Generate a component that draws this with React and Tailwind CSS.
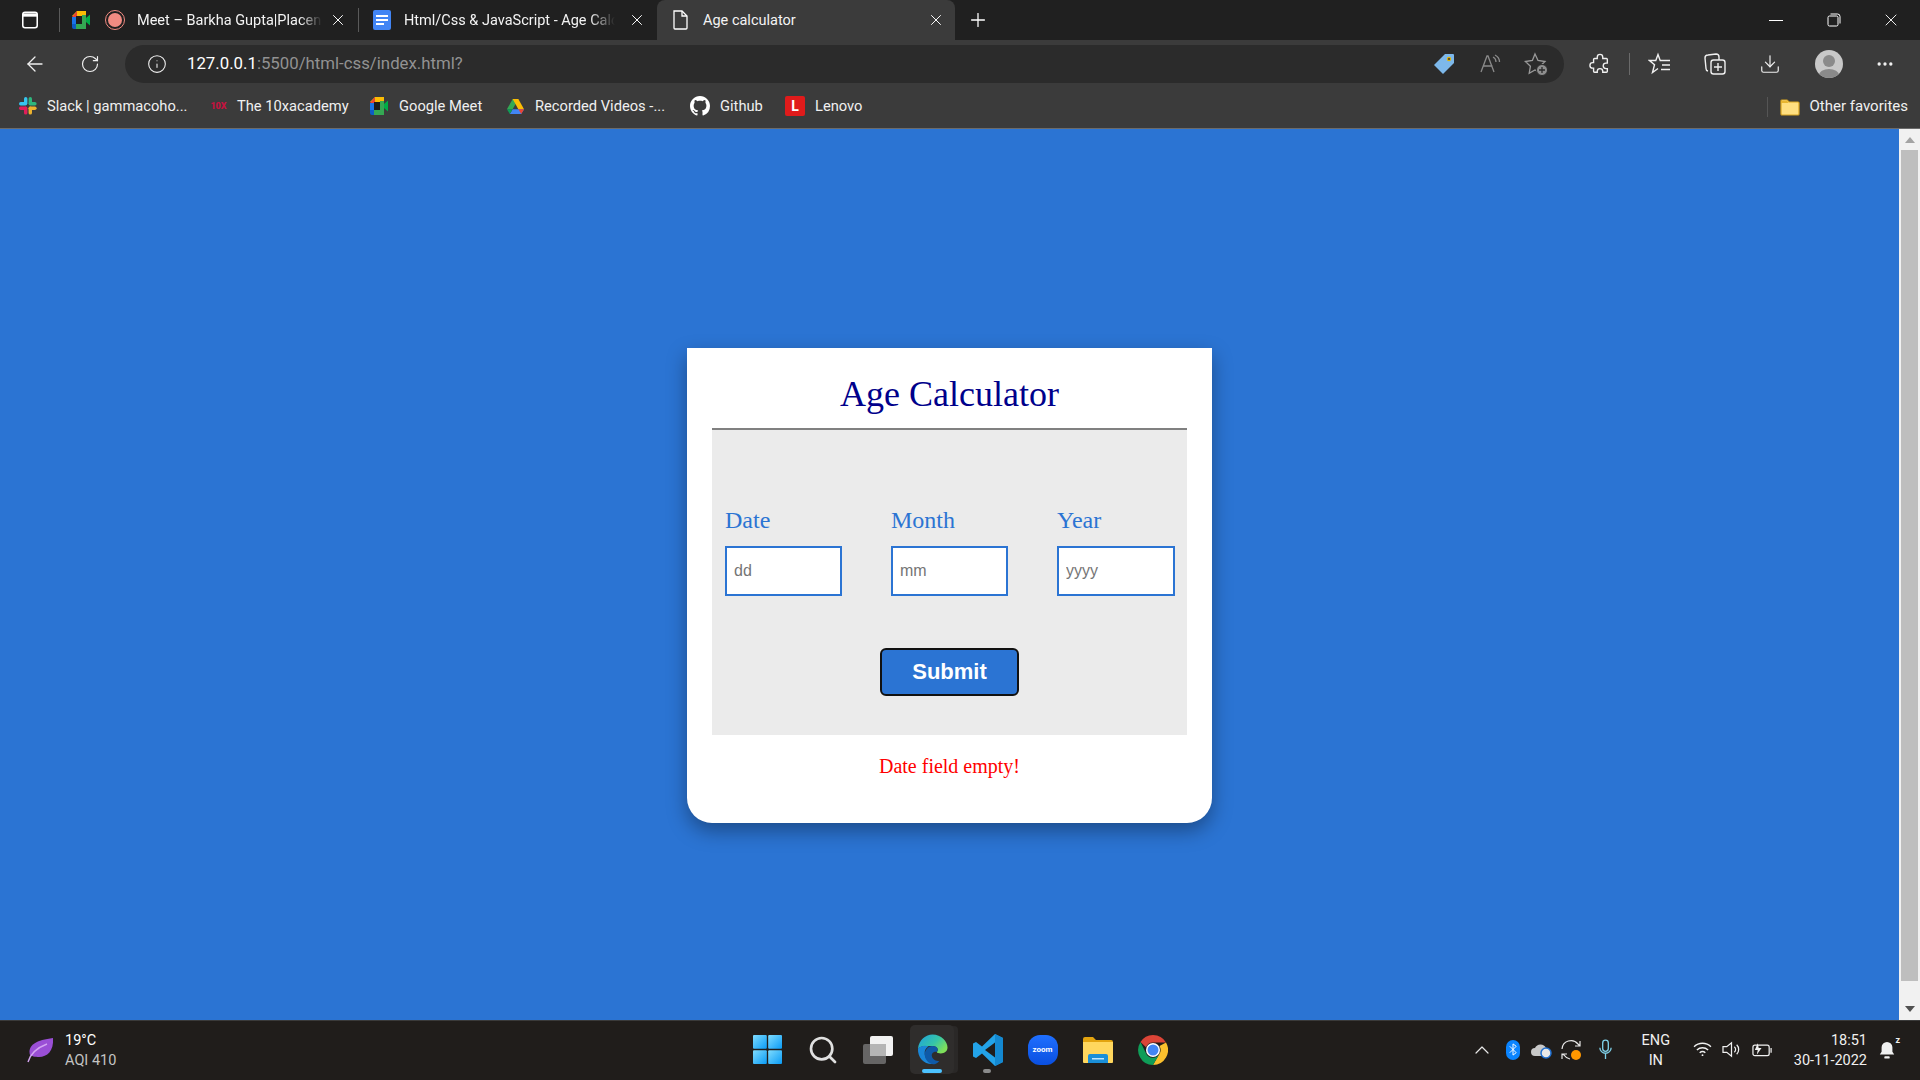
import { ChevronUp, Info, MoreHorizontal, Plus, X, ArrowLeft, RotateCw, Download, Search } from "lucide-react";

const chromeFont = "font-['Roboto','Noto_Sans',sans-serif]";

/* browser tab */
function Tab({ icons, title, width, active, textWidth, close, fade }) {
  return (
    <div
      className={`flex h-[40px] items-center ${width} ${
        active ? "rounded-t-[8px] bg-[#3b3b3b]" : ""
      }`}
    >
      {icons}
      <span
        className={`whitespace-nowrap pt-[2px] text-[14.5px] text-[#f3f3f3] ${textWidth} ${
          fade ? "[mask-image:linear-gradient(to_right,black_88%,transparent_100%)]" : ""
        }`}
      >
        {title}
      </span>
      <X className={`${close} h-[18px] w-[18px] shrink-0 text-white`} strokeWidth={1.3} />
    </div>
  );
}

function MeetIcon({ className = "" }) {
  return (
    <svg viewBox="0 0 20 20" className={`h-[20px] w-[20px] shrink-0 ${className}`}>
      <path d="M6 1h9v5H1z" fill="#fbbc04" />
      <path d="M6 1v6H1z" fill="#ea4335" />
      <rect x="1" y="7" width="4" height="7" fill="#1a73e8" />
      <path d="M1 14h4v5H3a2 2 0 0 1-2-2z" fill="#0d5bc5" />
      <rect x="5" y="14" width="10" height="5" fill="#34a853" />
      <rect x="11" y="5" width="4" height="10" fill="#34a853" />
      <path d="M15 8l4-3.500v11L15 12z" fill="#00ac47" />
      <rect x="5" y="6" width="6" height="8" fill="#1d1d1d" />
    </svg>
  );
}

function DriveIcon() {
  return (
    <svg viewBox="0 0 20 20" className="h-[19px] w-[19px] shrink-0">
      <path d="M7 2h6l-6 11H1z" fill="#34a853" />
      <path d="M7 2h6l6 11h-6z" fill="#fbbc04" />
      <path d="M4 18l3-5h12l-3 5z" fill="#4285f4" />
      <path d="M1 13h6l-3 5z" fill="#0f9d58" />
      <path d="M13 13h6l-3 5z" fill="#ea4335" />
    </svg>
  );
}

function SlackIcon() {
  return (
    <svg viewBox="0 0 20 20" className="h-[20px] w-[20px] shrink-0">
      <rect x="6" y="1" width="3.400" height="8" rx="1.700" fill="#36c5f0" />
      <rect x="1" y="6" width="8" height="3.400" rx="1.700" fill="#36c5f0" />
      <rect x="10.600" y="1" width="3.400" height="8" rx="1.700" fill="#2eb67d" />
      <rect x="10.600" y="6" width="8" height="3.400" rx="1.700" fill="#2eb67d" />
      <rect x="10.600" y="10.600" width="8" height="3.400" rx="1.700" fill="#ecb22e" />
      <rect x="10.600" y="10.600" width="3.400" height="8" rx="1.700" fill="#ecb22e" />
      <rect x="1" y="10.600" width="8" height="3.400" rx="1.700" fill="#e01e5a" />
      <rect x="6" y="10.600" width="3.400" height="8" rx="1.700" fill="#e01e5a" />
    </svg>
  );
}

function GithubIcon() {
  return (
    <svg viewBox="0 0 16 16" className="h-[20px] w-[20px] shrink-0" fill="#fff">
      <path d="M8 0C3.58 0 0 3.58 0 8c0 3.54 2.29 6.53 5.47 7.59.4.07.55-.17.55-.38 0-.19-.01-.82-.01-1.49-2.01.37-2.53-.49-2.69-.94-.09-.23-.48-.94-.82-1.13-.28-.15-.68-.52-.01-.53.63-.01 1.08.58 1.23.82.72 1.21 1.87.87 2.33.66.07-.52.28-.87.51-1.07-1.78-.2-3.64-.89-3.64-3.95 0-.87.31-1.59.82-2.15-.08-.2-.36-1.02.08-2.12 0 0 .67-.21 2.2.82.64-.18 1.32-.27 2-.27s1.36.09 2 .27c1.53-1.04 2.2-.82 2.2-.82.44 1.1.16 1.92.08 2.12.51.56.82 1.27.82 2.15 0 3.07-1.87 3.75-3.65 3.95.29.25.54.73.54 1.48 0 1.07-.01 1.93-.01 2.2 0 .21.15.46.55.38A8.01 8.01 0 0 0 16 8c0-4.42-3.58-8-8-8z" />
    </svg>
  );
}

function Bookmark({ icon, label, slot, gap = "ml-[9px]" }) {
  return (
    <div className={`flex items-center ${slot}`}>
      {icon}
      <span className={`${gap} whitespace-nowrap text-[14.7px] text-[#f0f0f0]`}>{label}</span>
    </div>
  );
}

function TopBar() {
  return (
    <div className={`shrink-0 ${chromeFont}`}>
      {/* tab strip */}
      <div className="flex h-[40px] items-center bg-[#202020]">
        <div className="flex w-[59px] justify-center">
          <svg viewBox="0 0 18 18" className="h-[20px] w-[20px]" fill="none" stroke="#fff" strokeWidth="1.400">
            <rect x="2.500" y="2" width="13" height="14" rx="2" />
            <path d="M2.500 4.500h13" strokeWidth="3" />
          </svg>
        </div>
        <div className="h-[24px] w-px bg-[#5a5a5a]" />
        <Tab
          fade
          width="w-[298px]"
          textWidth="w-[185px]"
          close="ml-[7px]"
          title="Meet – Barkha Gupta|Placen"
          icons={
            <>
              <MeetIcon className="ml-[11px]" />
              <span className="ml-[14px] mr-[12px] flex h-[20px] w-[20px] items-center justify-center rounded-full border border-[#f28b82]">
                <span className="h-[14px] w-[14px] rounded-full bg-[#f28b82]" />
              </span>
            </>
          }
        />
        <div className="h-[24px] w-px bg-[#5a5a5a]" />
        <Tab
          fade
          width="w-[298px]"
          textWidth="w-[211px]"
          close="ml-[13px]"
          title="Html/Css & JavaScript - Age Calc"
          icons={
            <svg viewBox="0 0 20 20" className="ml-[13px] mr-[12px] h-[20px] w-[20px] shrink-0">
              <rect x="1" y="0" width="18" height="20" rx="2" fill="#4285f4" />
              <path d="M4 6h12M4 10h12M4 14h8" stroke="#fff" strokeWidth="2" />
            </svg>
          }
        />
        <Tab
          active
          width="w-[298px]"
          textWidth="w-[226px]"
          close="ml-[-2px]"
          title="Age calculator"
          icons={
            <svg viewBox="0 0 16 20" className="ml-[15px] mr-[15px] h-[20px] w-[16px] shrink-0" fill="none" stroke="#fff" strokeWidth="1.300">
              <path d="M2 1h8l5 5v12a1 1 0 0 1-1 1H3a1 1 0 0 1-1-1z" />
              <path d="M10 1v5h5" />
            </svg>
          }
        />
        <Plus className="ml-[12px] h-[22px] w-[22px] text-white" strokeWidth={1.400} />
        <div className="flex-1" />
        <div className="flex items-center">
          <span className="h-px w-[14px] bg-white" />
          <svg viewBox="0 0 14 14" className="ml-[44px] h-[14px] w-[14px]" fill="none" stroke="#fff" strokeWidth="1">
            <rect x="1" y="3" width="10" height="10" rx="1.500" />
            <path d="M3.500 1h7a2.500 2.500 0 0 1 2.500 2.500v7" />
          </svg>
          <X className="ml-[40px] mr-[19px] h-[20px] w-[20px] text-white" strokeWidth={1.100} />
        </div>
      </div>

      {/* toolbar */}
      <div className="flex h-[48px] items-center bg-[#3b3b3b]">
        <ArrowLeft className="ml-[23px] h-[24px] w-[24px] text-[#f0f0f0]" strokeWidth={1.300} />
        <RotateCw className="ml-[33px] h-[20px] w-[20px] text-[#f0f0f0]" strokeWidth={1.400} />
        <div className="ml-[25px] flex h-[38px] w-[1439px] items-center rounded-full bg-[#2b2b2b]">
          <Info className="ml-[22px] h-[20px] w-[20px] text-[#f0f0f0]" strokeWidth={1.300} />
          <span className="ml-[20px] text-[16.8px] text-white">
            127.0.0.1<span className="text-[#929292]">:5500/html-css/index.html?</span>
          </span>
          <div className="flex-1" />
          <svg viewBox="0 0 22 22" className="h-[22px] w-[22px]">
            <path d="M12 1h8a1 1 0 0 1 1 1v8L10 21 1 12z" fill="#7db8ea" />
            <circle cx="16" cy="6" r="2.200" fill="#e2b100" />
            <circle cx="16" cy="6" r="1" fill="#333" />
          </svg>
          <svg viewBox="0 0 22 22" className="ml-[24px] h-[22px] w-[22px]" fill="none" stroke="#8a8a8a" strokeWidth="1.300">
            <path d="M2 19L8 3h1l6 16M4.500 13h9" />
            <path d="M14 4c2 1 3 3 3 5M16 2c3 1.500 4.500 4 4.500 7" />
          </svg>
          <svg viewBox="0 0 24 24" className="ml-[23px] mr-[16px] h-[24px] w-[24px]" fill="none" stroke="#9a9a9a" strokeWidth="1.300">
            <path d="M11 2l3 6.500 7 1-5 4.800 1.200 7-6.200-3.300-5.800 3.300 1.200-7-5-4.800 7-1z" />
            <circle cx="18" cy="18" r="5.500" fill="#8f8f8f" stroke="#2b2b2b" strokeWidth="1" />
            <path d="M18 15v6M15 18h6" stroke="#2b2b2b" strokeWidth="1.300" />
          </svg>
        </div>
        <svg viewBox="0 0 24 24" className="ml-[25px] h-[22px] w-[22px]" fill="none" stroke="#f0f0f0" strokeWidth="1.500">
          <path d="M9 6V4.500a3 3 0 0 1 6 0V6h4a1 1 0 0 1 1 1v4h-1.500a3 3 0 0 0 0 6H20v3a1 1 0 0 1-1 1h-4v-1a3 3 0 0 0-6 0v1H6a1 1 0 0 1-1-1v-3.500H4a3 3 0 0 1 0-6h1V7a1 1 0 0 1 1-1z" />
        </svg>
        <div className="ml-[18px] h-[22px] w-px bg-[#6a6a6a]" />
        <svg viewBox="0 0 24 24" className="ml-[18px] h-[24px] w-[24px]" fill="none" stroke="#f0f0f0" strokeWidth="1.400">
          <path d="M15 8.500h-2.800L10 2.500 7.800 8.500H1.500l5 4.300-2 7.700 5.500-4" />
          <path d="M15 8.500h7M14 13h8M13 17.500h9" />
        </svg>
        <svg viewBox="0 0 24 24" className="ml-[31px] h-[24px] w-[24px]" fill="none" stroke="#f0f0f0" strokeWidth="1.400">
          <rect x="8" y="8" width="14" height="14" rx="2.500" />
          <path d="M15 11v8M11 15h8" />
          <path d="M5 19a2.500 2.500 0 0 1-2-2.500L2 6a3 3 0 0 1 3-3l8-1a3 3 0 0 1 3 3v3" />
        </svg>
        <Download className="ml-[32px] h-[22px] w-[22px] text-[#f0f0f0]" strokeWidth={1.300} />
        <div className="ml-[34px] flex h-[28px] w-[28px] items-end justify-center overflow-hidden rounded-full bg-[#c8c8c8]">
          <svg viewBox="0 0 28 28" className="h-[28px] w-[28px]" fill="#8a8a8a">
            <circle cx="14" cy="11" r="6" />
            <ellipse cx="14" cy="25" rx="10" ry="6" />
          </svg>
        </div>
        <MoreHorizontal className="ml-[32px] h-[20px] w-[20px] text-[#f0f0f0]" strokeWidth={2} />
      </div>

      {/* favorites bar */}
      <div className="flex h-[41px] items-center border-b border-[#6b6b6b] bg-[#3b3b3b] pb-[3px]">
        <Bookmark slot="ml-[18px] w-[190px]" icon={<SlackIcon />} label="Slack | gammacoho..." />
        <Bookmark
          slot="w-[161px]"
          gap="ml-[8px]"
          icon={<span className="w-[21px] shrink-0 text-center text-[9px] font-black leading-none text-[#c4123f]">10X</span>}
          label="The 10xacademy"
        />
        <Bookmark slot="w-[137px]" icon={<MeetIcon />} label="Google Meet" gap="ml-[10px]" />
        <Bookmark slot="w-[184px]" icon={<DriveIcon />} label="Recorded Videos -..." gap="ml-[10px]" />
        <Bookmark slot="w-[95px]" icon={<GithubIcon />} label="Github" gap="ml-[10px]" />
        <Bookmark
          slot="w-[90px]"
          gap="ml-[10px]"
          icon={
            <span className="flex h-[20px] w-[20px] shrink-0 items-center justify-center rounded-[2px] bg-[#e01b1b] text-[14px] font-bold text-white">
              L
            </span>
          }
          label="Lenovo"
        />
        <div className="flex-1" />
        <div className="h-[20px] w-px bg-[#555]" />
        <svg viewBox="0 0 20 18" className="ml-[12px] h-[18px] w-[20px]">
          <path d="M1 3a1 1 0 0 1 1-1h5l2 2h9a1 1 0 0 1 1 1v11a1 1 0 0 1-1 1H2a1 1 0 0 1-1-1z" fill="#ffdf80" stroke="#d9a521" strokeWidth="1.200" />
          <path d="M1 3h6l1.500 2H1z" fill="#e8b530" />
        </svg>
        <span className="ml-[9px] mr-[12px] whitespace-nowrap text-[15px] text-[#f0f0f0]">Other favorites</span>
      </div>
    </div>
  );
}

function DateField({ label, placeholder, width = "w-[117px]" }) {
  return (
    <div className={`flex flex-col ${width}`}>
      <label className="mb-[12px] text-[24px] leading-[27px] text-[#2b74d3]">{label}</label>
      <input
        placeholder={placeholder}
        readOnly
        className="h-[50px] w-full border-2 border-[#2b74d3] bg-white px-[7px] font-['Liberation_Sans',sans-serif] text-[16px] outline-none placeholder:text-[#757575]"
      />
    </div>
  );
}

function Card() {
  return (
    <div className="h-[475px] w-[525px] rounded-b-[25px] bg-white px-[25px] font-['Liberation_Serif',serif] shadow-[0_8px_20px_rgba(0,0,0,0.35)]">
      <div className="flex h-[82px] items-center justify-center border-b-2 border-[#808080] pt-[11px]">
        <h1 className="text-[36px] leading-none text-[#00008b]">Age Calculator</h1>
      </div>
      <div className="flex h-[305px] flex-col items-center bg-[#ebebeb] pl-[13px] pr-[12px] pt-[77px]">
        <div className="flex w-full justify-between">
          <DateField label="Date" placeholder="dd" />
          <DateField label="Month" placeholder="mm" />
          <DateField label="Year" placeholder="yyyy" width="w-[118px]" />
        </div>
        <button className="mr-[1px] mt-[52px] h-[48px] w-[139px] rounded-[6px] border-2 border-[#111] bg-[#2b74d3] pb-[1px] font-['Liberation_Sans',sans-serif] text-[22px] font-bold text-white">
          Submit
        </button>
      </div>
      <p className="mt-[20px] text-center text-[20px] leading-[23px] text-[#ff0000]">Date field empty!</p>
    </div>
  );
}

function Scrollbar() {
  return (
    <div className="flex w-[21px] shrink-0 flex-col items-center bg-[#f1f1f1]">
      <div className="flex h-[21px] items-center justify-center pt-[1px]">
        <span className="h-0 w-0 border-x-[5px] border-b-[6px] border-x-transparent border-b-[#a3a3a3]" />
      </div>
      <div className="h-[831px] w-[17px] bg-[#bebebe]" />
      <div className="flex-1" />
      <div className="flex h-[22px] items-center justify-center">
        <span className="h-0 w-0 border-x-[5px] border-t-[6px] border-x-transparent border-t-[#505050]" />
      </div>
    </div>
  );
}

function TaskIcon({ children, className = "" }) {
  return <div className={`flex h-[49px] w-[55px] items-center justify-center ${className}`}>{children}</div>;
}

function Taskbar() {
  return (
    <div className={`flex h-[60px] shrink-0 items-center border-t border-[#3a3a3a] bg-[#201d1b] pb-[2px] ${chromeFont}`}>
      {/* weather */}
      <div className="flex w-[740px] items-center">
        <svg viewBox="0 0 28 26" className="ml-[26px] h-[26px] w-[28px]">
          <path d="M27 1c1 13-6 19-14 19-4 0-8-1-9-2C1 8 11 3 27 1z" fill="#9a4fd6" />
          <path d="M2 25C5 15 13 10 21 7" stroke="#d3a5f2" strokeWidth="1.400" fill="none" />
        </svg>
        <div className="ml-[11px] pt-[2px] text-[14.5px] leading-[20px]">
          <div className="text-white">19°C</div>
          <div className="text-[#c4c4c4]">AQI 410</div>
        </div>
      </div>

      {/* pinned apps */}
      <div className="flex items-center">
        <TaskIcon>
          <svg viewBox="0 0 30 30" className="h-[29px] w-[29px]">
            <defs>
              <linearGradient id="win" x1="0" y1="0" x2="1" y2="1">
                <stop offset="0" stopColor="#7fdcff" />
                <stop offset="1" stopColor="#0a9bf5" />
              </linearGradient>
            </defs>
            <rect x="0" y="0" width="14.300" height="14.300" rx="1" fill="url(#win)" />
            <rect x="15.700" y="0" width="14.300" height="14.300" rx="1" fill="url(#win)" />
            <rect x="0" y="15.700" width="14.300" height="14.300" rx="1" fill="url(#win)" />
            <rect x="15.700" y="15.700" width="14.300" height="14.300" rx="1" fill="url(#win)" />
          </svg>
        </TaskIcon>
        <TaskIcon>
          <Search className="h-[32px] w-[32px] text-[#e0e0e0]" strokeWidth={2} />
        </TaskIcon>
        <TaskIcon>
          <svg viewBox="0 0 30 28" className="h-[28px] w-[30px]">
            <rect x="7" y="0" width="23" height="20" rx="2" fill="#f2f2f2" />
            <rect x="0" y="8" width="23" height="20" rx="2" fill="#6e6e6e" fillOpacity="0.900" />
            <rect x="7" y="8" width="16" height="12" fill="#b5b5b5" />
          </svg>
        </TaskIcon>
        <TaskIcon className="relative">
          <div className="absolute left-[5px] top-0 h-[49px] w-[44px] rounded-[5px] bg-[#2f2d2c] shadow-[5px_0_0_-1px_#2a2827]" />
          <svg viewBox="0 0 32 32" className="relative h-[31px] w-[31px]">
            <defs>
              <linearGradient id="edgeA" x1="0" y1="0" x2="1" y2="0.600">
                <stop offset="0" stopColor="#1e9fe0" />
                <stop offset="0.600" stopColor="#35c5a8" />
                <stop offset="1" stopColor="#7fe05a" />
              </linearGradient>
            </defs>
            <path d="M1 15C2 6 9 .500 16 .500c9 0 15.500 7 15.500 13.500 0 4-3 6-7 6-2 0-4-.500-4-1.500 2-1.500 1-6-4.500-6C9 12.500 4 12 1 15z" fill="url(#edgeA)" />
            <path d="M1 15c3-3 8-3.500 11-2-3 1.500-4.500 4-4 8 .500 4 4 8 9 10C8 32 .500 25 1 15z" fill="#1a86d8" />
            <path d="M16 12.500c5 0 6.500 3.500 4.500 6-3-.500-6 1-5 5 .700 2.700 4 4.500 7.500 4.500C20 31 17 31.500 15 31c-5-2-7-6-7-10s3.500-8.500 8-8.500z" fill="#0f5aa8" />
          </svg>
          <span className="absolute bottom-[1px] left-[17px] h-[4px] w-[20px] rounded-full bg-[#4cc2ff]" />
        </TaskIcon>
        <TaskIcon className="relative">
          <svg viewBox="0 0 30 32" className="h-[32px] w-[30px]">
            <path d="M22 0l8 4v24l-8 4-13-12.500-6 4.500-3-1.500V9.500L3 8l6 4.500z" fill="#23a3e8" />
            <path d="M22 8.500L12 16l10 7.500z" fill="#201d1b" />
            <path d="M22 0l8 4v24l-8 4z" fill="#1488d0" />
          </svg>
          <span className="absolute bottom-[1px] left-[23px] h-[4px] w-[8px] rounded-full bg-[#8a8a8a]" />
        </TaskIcon>
        <TaskIcon>
          <div className="flex h-[30px] w-[30px] items-center justify-center rounded-[12px] bg-gradient-to-b from-[#1f6fff] to-[#0a4fe0] text-[8px] font-bold text-white">
            zoom
          </div>
        </TaskIcon>
        <TaskIcon>
          <svg viewBox="0 0 30 28" className="h-[28px] w-[30px]">
            <path d="M0 3a2 2 0 0 1 2-2h8l3 3h15a2 2 0 0 1 2 2v4H0z" fill="#e3a40f" />
            <path d="M0 6h30v20a1 1 0 0 1-1 1H1a1 1 0 0 1-1-1z" fill="#ffd75e" />
            <path d="M5 27v-7a2 2 0 0 1 2-2h16a2 2 0 0 1 2 2v7z" fill="#1a8fd8" />
            <rect x="9" y="22" width="12" height="1.500" fill="#bfe6ff" />
          </svg>
        </TaskIcon>
        <TaskIcon>
          <svg viewBox="0 0 30 30" className="h-[30px] w-[30px]">
            <path d="M15 0a15 15 0 0 1 13 7.500H15a7.500 7.500 0 0 0-7 4.700L2.500 7A15 15 0 0 1 15 0z" fill="#db4437" />
            <path d="M28 7.500A15 15 0 0 1 15 30l6.500-11.200A7.500 7.500 0 0 0 21.500 11z" fill="#fbc02d" />
            <path d="M2.500 7A15 15 0 0 0 15 30l6.500-11.200a7.500 7.500 0 0 1-13.500-.6z" fill="#0f9d58" />
            <circle cx="15" cy="15" r="7" fill="#fff" />
            <circle cx="15" cy="15" r="5.500" fill="#4285f4" />
          </svg>
        </TaskIcon>
      </div>

      <div className="flex-1" />

      {/* tray */}
      <div className="flex items-center">
        <ChevronUp className="h-[24px] w-[24px] text-[#e8e8e8]" strokeWidth={1.200} />
        <div className="ml-[12px] flex h-[20px] w-[14px] items-center justify-center rounded-full bg-[#0a84ff]">
          <svg viewBox="0 0 10 16" className="h-[13px] w-[8px]" fill="none" stroke="#fff" strokeWidth="1.200">
            <path d="M1 4l8 8-4 3V1l4 3-8 8" />
          </svg>
        </div>
        <svg viewBox="0 0 22 18" className="ml-[10px] h-[18px] w-[22px]">
          <path d="M5 15a4 4 0 0 1 0-8 6 6 0 0 1 11 0 4 4 0 0 1 0 8z" fill="#c8c8c8" />
          <circle cx="16" cy="12" r="5" fill="#e8e8e8" stroke="#1f6fd0" strokeWidth="1.500" />
        </svg>
        <svg viewBox="0 0 22 22" className="ml-[8px] h-[22px] w-[22px]" fill="none" stroke="#e8e8e8" strokeWidth="1.200">
          <path d="M2 10a9 9 0 0 1 16-5l2 2M20 2v5h-5M10 20a9 9 0 0 1-6-4l-2-1M2 20v-5h5" />
          <circle cx="16" cy="16" r="5" fill="#ff9800" stroke="none" />
        </svg>
        <svg viewBox="0 0 16 22" className="ml-[16px] h-[21px] w-[15px]" fill="none" stroke="#7fd0e8" strokeWidth="1.400">
          <rect x="5" y="1" width="6" height="12" rx="3" />
          <path d="M2 9a6 6 0 0 0 12 0M8 15v6" />
        </svg>
        <div className="ml-[24px] w-[38px] pt-[2px] text-center text-[14.5px] leading-[20px] text-[#f0f0f0]">
          <div>ENG</div>
          <div>IN</div>
        </div>
        <svg viewBox="0 0 20 16" className="ml-[18px] h-[15px] w-[19px]" fill="none" stroke="#f0f0f0" strokeWidth="1.500">
          <path d="M1 5a13 13 0 0 1 18 0M4 8.500a9 9 0 0 1 12 0M7 11.500a4.500 4.500 0 0 1 6 0" />
          <circle cx="10" cy="14" r="1" fill="#f0f0f0" stroke="none" />
        </svg>
        <svg viewBox="0 0 20 18" className="ml-[10px] h-[17px] w-[19px]" fill="none" stroke="#f0f0f0" strokeWidth="1.300">
          <path d="M1 6h4l5-4v14l-5-4H1zM13 6a4 4 0 0 1 0 6M15.500 4a7 7 0 0 1 0 10" />
        </svg>
        <svg viewBox="0 0 22 16" className="ml-[11px] h-[16px] w-[21px]" fill="none" stroke="#f0f0f0" strokeWidth="1.300">
          <rect x="1" y="3" width="17" height="11" rx="2" />
          <path d="M20 6v5" />
          <path d="M6 1L3 8h3l-1 5 5-7H7z" fill="#f0f0f0" stroke="none" />
        </svg>
        <div className="ml-[21px] pt-[2px] text-right text-[14.5px] leading-[20px] text-[#f0f0f0]">
          <div>18:51</div>
          <div>30-11-2022</div>
        </div>
        <div className="relative ml-[11px] mr-[24px]">
          <svg viewBox="0 0 20 22" className="h-[20px] w-[18px]" fill="#f0f0f0">
            <path d="M10 2a6 6 0 0 0-6 6v5l-2 3h16l-2-3V8a6 6 0 0 0-6-6z" />
            <rect x="7" y="18" width="6" height="2.500" rx="1" />
          </svg>
          <span className="absolute -right-[4px] -top-[4px] text-[9px] font-bold leading-none text-[#f0f0f0]">z</span>
        </div>
      </div>
    </div>
  );
}

export default function App() {
  return (
    <div className="flex h-screen w-full flex-col overflow-hidden bg-[#2b74d3]">
      <TopBar />
      <div className="flex min-h-0 flex-1">
        <div className="flex flex-1 justify-center pt-[219px]">
          <Card />
        </div>
        <Scrollbar />
      </div>
      <Taskbar />
    </div>
  );
}
